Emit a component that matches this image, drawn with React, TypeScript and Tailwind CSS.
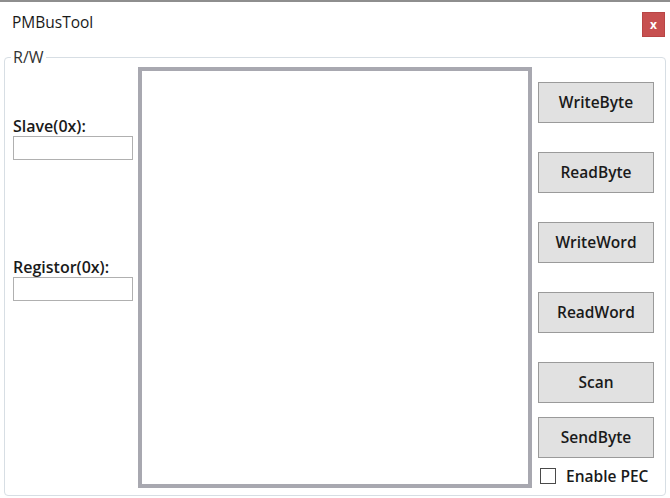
import React from "react";

function Btn({ label, className = "" }: { label: string; className?: string }) {
  return (
    <button
      className={`w-[116px] h-[41px] bg-[#e1e1e1] border border-[#9a9a9a] text-[15.5px] font-semibold text-[#1a1a1a] flex items-center justify-center ${className}`}
    >
      {label}
    </button>
  );
}

export default function App() {
  return (
    <div
      className="w-[670px] h-[498px] bg-white flex flex-col overflow-hidden"
      style={{ fontFamily: '"Open Sans", "Noto Sans", sans-serif' }}
    >
      <div className="h-[2px] bg-[#8e8e8e]" />
      <div className="h-[45px] flex items-center justify-between pl-[12px] pr-[5px]">
        <span className="text-[15.5px] text-[#1a1a1a] -mt-[4px]">PMBusTool</span>
        <button className="w-[23px] h-[25px] bg-[#c75050] border border-[#b84545] text-white text-[12px] font-bold flex items-center justify-center leading-none">
          x
        </button>
      </div>
      <fieldset className="ml-[4px] w-[662px] h-[449px] border border-[#d7dee4] rounded-[4px] px-0 pb-0">
        <legend className="ml-[6px] px-[2px] text-[16px] leading-[20px] text-[#333]">R/W</legend>
        <div className="flex flex-row pl-[8px]">
          <div className="w-[120px] flex flex-col">
            <label className="mt-[49px] h-[20px] leading-[20px] text-[16px] font-semibold text-[#1a1a1a] whitespace-nowrap">
              Slave(0x):
            </label>
            <input className="h-[24px] w-[120px] border border-[#b0b0b0] bg-white outline-none" />
            <label className="mt-[97px] h-[20px] leading-[20px] text-[16px] font-semibold text-[#1a1a1a] whitespace-nowrap">
              Registor(0x):
            </label>
            <input className="h-[24px] w-[120px] border border-[#b0b0b0] bg-white outline-none" />
          </div>
          <div className="ml-[5px] w-[394px] h-[421px] border-[4px] border-[#a8a8b0] bg-white" />
          <div className="ml-[6px] flex flex-col">
            <Btn label="WriteByte" className="mt-[15px]" />
            <Btn label="ReadByte" className="mt-[29px]" />
            <Btn label="WriteWord" className="mt-[29px]" />
            <Btn label="ReadWord" className="mt-[29px]" />
            <Btn label="Scan" className="mt-[29px]" />
            <Btn label="SendByte" className="mt-[14px]" />
            <div className="mt-[8px] flex items-center">
              <span className="ml-[2px] w-[16px] h-[16px] border border-[#4a4a4a] bg-white" />
              <span className="ml-[10px] text-[15.5px] leading-[20px] font-semibold text-[#1a1a1a] whitespace-nowrap">Enable PEC</span>
            </div>
          </div>
        </div>
      </fieldset>
    </div>
  );
}
